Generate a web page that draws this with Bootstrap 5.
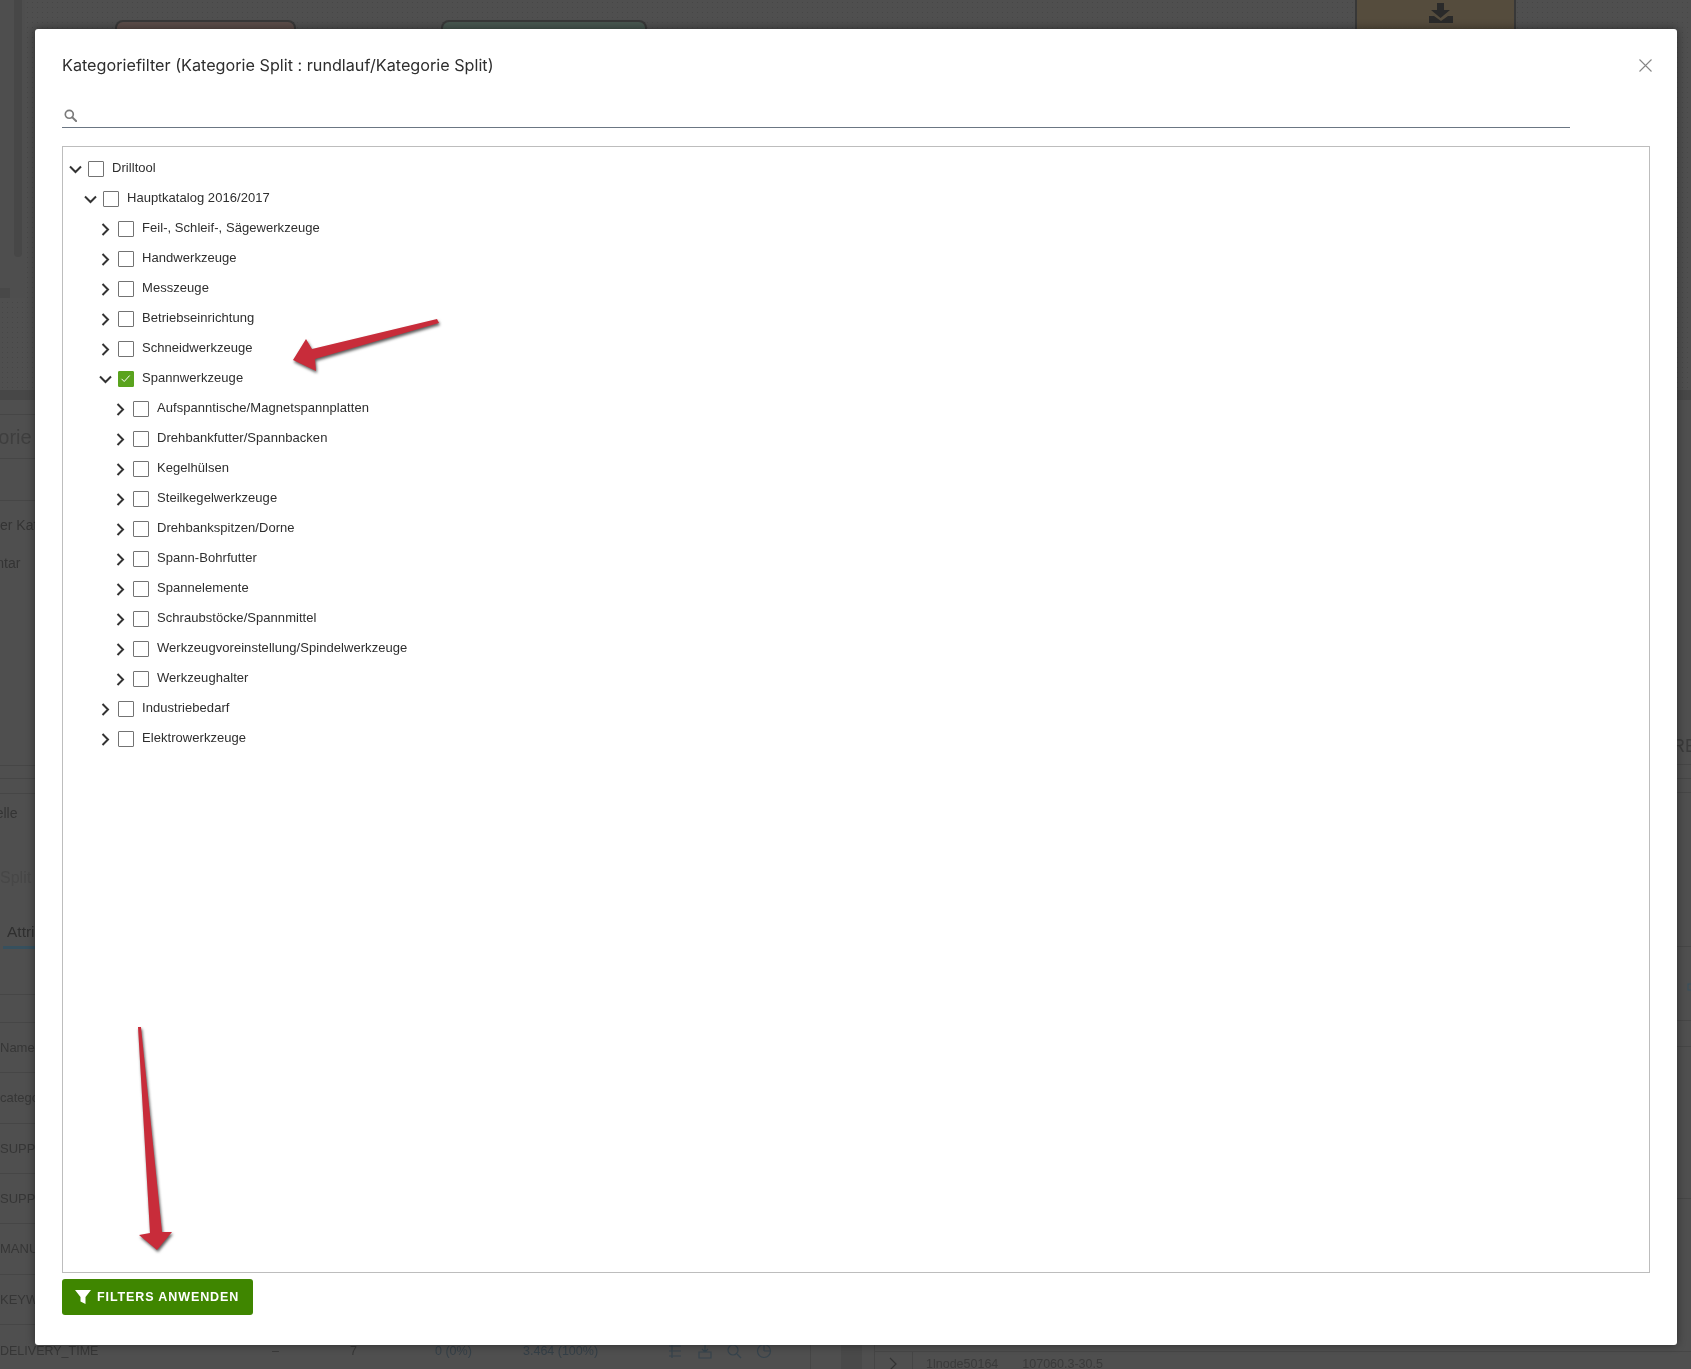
<!DOCTYPE html>
<html lang="de">
<head>
<meta charset="utf-8">
<title>Kategoriefilter</title>
<link href="https://cdn.jsdelivr.net/npm/bootstrap@5.3.0/dist/css/bootstrap.min.css" rel="stylesheet">
<style>
html,body{height:100%;overflow:hidden;background:#4f4f4f;font-family:"Liberation Sans",Arial,sans-serif}
.under{width:1691px;height:1369px;overflow:hidden;background:#4f4f4f;color:#383838}
.dots{background-image:radial-gradient(circle,#464646 .75px,transparent 1px);background-size:5px 5px}
.top-zone{height:390px}
.strip{width:25px;height:298px;background:#4e4e4e;padding-left:14px;flex:none}
.thumb{width:8px;height:257px;background:#474747;border-radius:0 0 4px 4px}
.nub{width:10px;height:10px;background:#484848;margin:31px 0 0 -14px}
.tile{height:110px;border:2px solid #383838;border-bottom:0;border-radius:8px 8px 0 0;margin-top:20px;flex:none}
.tile-a{width:181px;margin-left:90px;background:#5a4c48}
.tile-b{width:206px;margin-left:145px;background:#47564f}
.tile-c{width:161px;margin-left:708px;margin-top:-10px;background:#554c3d;border-radius:0 0 4px 4px;border-top:0;text-align:center;padding:10px 0 0 10px}
.band{height:10px;background:#474747}
.pane-l{width:841px;flex:none;overflow:hidden}
.gutter{width:21px;flex:none;background:#494949}
.pane-r{flex:1;border-left:1px solid #454545;margin-left:12px;overflow:hidden}
.ln{display:flow-root;border-bottom:1px solid #464646}
.h-a{height:15px}.h-b{height:44px}.h-c{height:42px}.h-d{height:265px}.h-e{height:13px}.h-f{height:15px}.h-g{height:201px}.h-h{height:28px}
.soft{filter:blur(.45px)}
.t20{font-size:20px;color:#3e3e3e;line-height:44px;margin-left:-54px;white-space:nowrap}
.t13{font-size:14px;line-height:20px;font-weight:400;color:#343434;white-space:nowrap}
.sh-kat{margin-left:-49px;margin-top:14px}.sh-kom{margin-left:-52px;margin-top:18px}
.sh-que{margin-left:-23px;margin-top:9px}
.sh-split{font-size:16px;line-height:24px;color:#474747;margin-top:43px;white-space:nowrap}
.tab-lab{font-size:15.500px;line-height:22px;color:#2f2f2f;margin:31px 0 0 3px;padding:0 0 3px 4px;border-bottom:3px solid #36505e;white-space:nowrap}
.tab-wrap{width:120px}
.dr{height:50.330px;font-size:13px;color:#363636;white-space:nowrap}
.dr-grid{display:grid;grid-template-columns:272px 78px 85px 88px 144px repeat(4,29.500px) 25px 1fr;align-items:center;height:52px;font-size:12.500px;color:#363636;white-space:nowrap}
.teal{color:#343f47}
.ic{width:16px;height:16px;stroke:#36434c;fill:none;stroke-width:1.200}
.vline{display:block;height:52px;border-left:1px solid #464646}
.rr-a{height:365px;text-align:right;font-size:18px;line-height:18px;color:#3a3a3a;padding-top:337px;margin-right:-6px;white-space:nowrap}
.rr-b{height:14px}.rr-c{height:14px}.rr-d{height:154px}.rr-e{height:74px}.rr-f{height:26px}.rr-g{height:152px}.rr-h{height:153px}
.rr-row{padding-left:14px;font-size:12.500px;color:#3a3a3a;line-height:24px;white-space:nowrap}
.lock{display:block;margin:31px -4px 0 auto}
.rr-chev{width:24px;border-right:1px solid #454545;height:24px;flex:none}
.rr-code{margin-left:13px}
/* modal */
.filter-modal{overflow:hidden}
.filter-dialog{max-width:none;width:1642px;height:1316px;margin:29px 0 0 35px}
.filter-content{height:100%;border:0;border-radius:3px;box-shadow:0 0 9px rgba(0,0,0,.45);padding:0 27px 30px;color:#333}
.title-row{height:71px;padding-top:25px}
.filter-title{font-family:Inter,"Liberation Sans",sans-serif;font-size:16.200px;font-weight:400;line-height:22px;color:#2e2e2e;margin:0}
.x-btn{background:none;border:0;padding:0;width:15px;height:15px;margin:4px -3px 0 0;line-height:0}
.search-row{width:1508px;height:28px;border-bottom:1.500px solid #6b7683;padding-left:2px;margin-bottom:18px}
.search-ic{margin-top:4px}
.search-row input{border:0;outline:0;flex:1;font-size:13px;background:transparent;padding:0;box-shadow:none}
.tree-box{flex:1;border:1px solid #bdbdbd;padding:7px 0 0 5px;min-height:0;margin-bottom:6px}
.tree,.tree ul{list-style:none;margin:0;padding:0}
.tree ul{padding-left:15px}
.node{height:30px;font-size:13px;letter-spacing:.05px;color:#2e2e2e}
.tw{width:20px;flex:none;line-height:0;padding-left:1px}
.tw-closed{padding-left:3px}
.tick{width:16px;height:16px;flex:none;border:1.700px solid #737373;border-radius:1px;background:#fff;margin-right:8px;line-height:0}
.tick.on{background:#5aa31e;border-color:#5aa31e}
.lbl{margin-top:-2px}
.apply{width:191px;height:36px;background:#3f8600;border:0;border-radius:3px;color:#fff;font-family:"Liberation Sans",Arial,sans-serif;font-size:12.500px;font-weight:700;letter-spacing:.9px;padding:0 0 0 13px;gap:6px;white-space:nowrap}
.apply:hover{background:#3f8600;color:#fff}
.marks{position:fixed;left:0;top:0;width:1691px;height:1369px;z-index:1060;pointer-events:none}
.arrow{fill:#c82c3a;filter:drop-shadow(1.500px 2px 1.500px rgba(0,0,0,.65))}
</style>
</head>
<body>

<div class="under" aria-hidden="true">
  <div class="top-zone dots d-flex overflow-hidden">
    <div class="strip"><div class="thumb"></div><div class="nub"></div></div>
    <div class="tile tile-a"></div>
    <div class="tile tile-b"></div>
    <div class="tile tile-c">
      <svg width="26" height="20" viewBox="0 0 26 20"><path fill="#2a2a2a" d="M9 0h7v7h6l-9.500 8L3 7h6zM1 13h5l7 5 7-5h5v7H1z"/></svg>
    </div>
  </div>
  <div class="band"></div>
  <div class="d-flex">
    <div class="pane-l">
      <div class="h-a ln"></div>
      <div class="h-b ln"><div class="t20 soft">Kategorie Split</div></div>
      <div class="h-c ln"></div>
      <div class="h-d ln soft">
        <div class="t13 sh-kat">Name der Kategorie</div>
        <div class="t13 sh-kom">Kommentar</div>
      </div>
      <div class="h-e ln"></div>
      <div class="h-f ln"></div>
      <div class="h-g ln soft">
        <div class="t13 sh-que">Quelle</div>
        <div class="sh-split">Split : Kategorie</div>
        <div class="tab-wrap"><div class="tab-lab">Attribute</div></div>
      </div>
      <div class="h-h ln"></div>
      <div class="dr ln d-flex align-items-center soft">Name</div>
      <div class="dr ln d-flex align-items-center soft">category</div>
      <div class="dr ln d-flex align-items-center soft">SUPPLIER_NAME</div>
      <div class="dr ln d-flex align-items-center soft">SUPPLIER_PID</div>
      <div class="dr ln d-flex align-items-center soft">MANUFACTURER</div>
      <div class="dr ln d-flex align-items-center soft">KEYWORDS</div>
      <div class="dr-grid soft">
        <span>DELIVERY_TIME</span><span>–</span><span>7</span>
        <span class="teal">0 (0%)</span><span class="teal">3.464 (100%)</span>
        <svg class="ic" viewBox="0 0 16 16"><path d="M2 3h12M2 8h12M2 13h12M5 1v14"/></svg>
        <svg class="ic" viewBox="0 0 16 16"><path d="M2 9h12v6H2zM8 1v8M5 6l3 3 3-3"/></svg>
        <svg class="ic" viewBox="0 0 16 16"><circle cx="7" cy="7" r="5"/><path d="M11 11l4 4"/></svg>
        <svg class="ic" viewBox="0 0 16 16"><circle cx="8" cy="8" r="6.500"/><path d="M8 8V1.500M8 8h6.500"/></svg>
        <span></span><span class="vline"></span>
      </div>
    </div>
    <div class="gutter"></div>
    <div class="pane-r">
      <div class="rr-a ln soft">FEATURE</div>
      <div class="rr-b ln"></div>
      <div class="rr-c ln"></div>
      <div class="rr-d ln"></div>
      <div class="rr-e ln"><svg class="lock" width="8" height="14" viewBox="0 0 8 14"><rect x="1" y="6" width="7" height="6" fill="none" stroke="#36505e"/></svg></div>
      <div class="rr-f ln"></div>
      <div class="rr-g ln"></div>
      <div class="rr-h ln"></div>
      <div class="rr-row d-flex align-items-center soft">
        <span class="rr-chev d-flex align-items-center"><svg width="8" height="14" viewBox="0 0 8 14"><path d="M1 1l6 6-6 6" fill="none" stroke="#333" stroke-width="1.200"/></svg></span>
        <span class="rr-code">1lnode50164</span><span class="ms-4">107060.3-30.5</span>
      </div>
    </div>
  </div>
</div>

<div class="modal d-block filter-modal" tabindex="-1" role="dialog" aria-modal="true">
  <div class="modal-dialog filter-dialog">
    <div class="modal-content filter-content d-flex flex-column">
      <div class="title-row d-flex justify-content-between align-items-start">
        <h5 class="filter-title">Kategoriefilter (Kategorie Split : rundlauf/Kategorie Split)</h5>
        <button class="x-btn" type="button" aria-label="Schließen">
          <svg width="13" height="13" viewBox="0 0 13 13"><path d="M.5.5l12 12M12.500.5l-12 12" stroke="#868686" stroke-width="1.100" fill="none"/></svg>
        </button>
      </div>
      <div class="search-row d-flex align-items-center gap-2">
        <svg class="search-ic" width="13" height="13" viewBox="0 0 14 14"><circle cx="5.700" cy="5.700" r="4.300" fill="none" stroke="#7a7a7a" stroke-width="1.800"/><path d="M9 9l4 4" stroke="#7a7a7a" stroke-width="2.200" stroke-linecap="round"/></svg>
        <input type="text" aria-label="Suche">
      </div>
      <div class="tree-box">
        <ul class="tree" id="tree"></ul>
      </div>
      <div>
        <button class="btn apply d-inline-flex align-items-center text-uppercase" type="button">
          <svg width="16" height="14" viewBox="0 0 16 14"><path fill="#fff" d="M0 0h16l-5.500 7v7l-5-2.500V7z"/></svg>
          Filters anwenden
        </button>
      </div>
    </div>
  </div>
</div>

<svg class="marks" viewBox="0 0 1691 1369" aria-hidden="true">
  <polygon class="arrow" points="437,319 439,323 315,359 316,371 293,360 306,339 312,349"/>
  <polygon class="arrow" points="138,1027 141,1027 162,1232 172,1232 157,1250 139,1235 150,1233"/>
</svg>

<script src="https://cdn.jsdelivr.net/npm/bootstrap@5.3.0/dist/js/bootstrap.bundle.min.js"></script>
<script>
const data=[["Drilltool",1,[["Hauptkatalog 2016/2017",1,[
 ["Feil-, Schleif-, Sägewerkzeuge"],["Handwerkzeuge"],["Messzeuge"],["Betriebseinrichtung"],["Schneidwerkzeuge"],
 ["Spannwerkzeuge",1,[["Aufspanntische/Magnetspannplatten"],["Drehbankfutter/Spannbacken"],["Kegelhülsen"],["Steilkegelwerkzeuge"],["Drehbankspitzen/Dorne"],["Spann-Bohrfutter"],["Spannelemente"],["Schraubstöcke/Spannmittel"],["Werkzeugvoreinstellung/Spindelwerkzeuge"],["Werkzeughalter"]],true],
 ["Industriebedarf"],["Elektrowerkzeuge"]]]]]];
const down='<svg width="13" height="9" viewBox="0 0 13 9"><path d="M1 1.500l5.500 5.500L12 1.500" fill="none" stroke="#333" stroke-width="2"/></svg>';
const right='<svg width="9" height="13" viewBox="0 0 9 13"><path d="M1.500 1l5.500 5.500L1.500 12" fill="none" stroke="#333" stroke-width="2"/></svg>';
const check='<svg width="13" height="13" viewBox="0 0 13 13"><path d="M2.500 6.800l2.700 2.700 5.500-6" fill="none" stroke="#fff" stroke-width="1"/></svg>';
function build(items){return items.map(([name,open,kids,on])=>`<li><div class="node d-flex align-items-center"><span class="tw ${open?'':'tw-closed'}">${open?down:right}</span><span class="tick ${on?'on':''}">${on?check:''}</span><span class="lbl">${name}</span></div>${kids?`<ul>${build(kids)}</ul>`:''}</li>`).join('')}
document.getElementById('tree').innerHTML=build(data);
</script>
</body>
</html>
